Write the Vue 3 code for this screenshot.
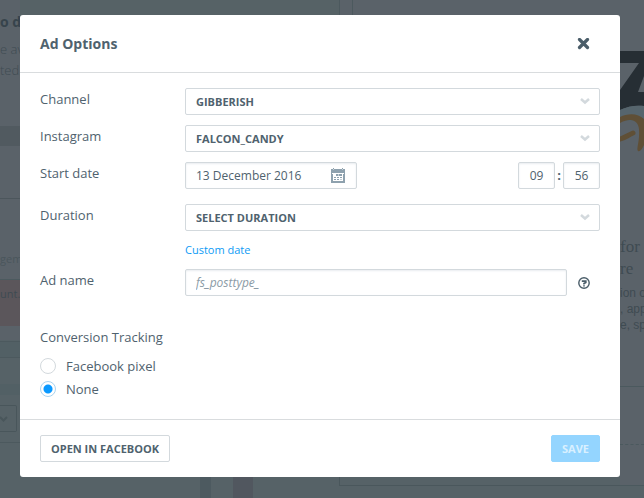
<script setup>
import { ref } from 'vue'

const channel = ref('GIBBERISH')
const instagram = ref('FALCON_CANDY')
const duration = ref('SELECT DURATION')
const date = ref('13 December 2016')
const hour = ref('09')
const minute = ref('56')
const adName = ref('')
const tracking = ref('none')
</script>

<template>
  <div class="screen">
    <div class="page" aria-hidden="true">
      <div class="left">
        <div class="intro">
          <b>o d</b>
          <p>e av</p>
          <p>ted.</p>
        </div>
        <div class="band"></div>
        <div class="panel"></div>
        <div class="tab">geme</div>
        <div class="alert">unt.</div>
        <div class="rows">
          <div class="row-a"></div>
          <div class="row-b"></div>
          <div class="row-c"></div>
        </div>
        <div class="picker-row">
          <div class="picker">
            <svg width="10" height="8" viewBox="0 0 10 8"><path d="M0 2l3.500 3.500L7 2" fill="none" stroke="#49565b" stroke-width="2" /></svg>
          </div>
        </div>
      </div>
      <div class="middle">
        <div class="top-strip"><i class="t1"></i><i class="t2"></i></div>
        <div class="bottom-strip">
          <i class="b1"></i><i class="b2"></i><i class="b3"></i><i class="b4"></i><i class="b5"></i>
        </div>
      </div>
      <div class="right">
        <svg class="logo" width="24" height="106" viewBox="0 0 24 106">
          <path d="M0 0H24V25L18 41H24V55C16 54 8 55 0 59V39L19 12H0Z" fill="#262e34" />
          <path d="M0 59C8 55 16 54 24 55V70H0Z" fill="#56656d" />
          <path d="M0 66C8 62 18 62 24 68V94C22 98 20 101 18 100C16 98 20 90 19 78C18 70 12 66 0 72Z" fill="#5f4f36" />
          <path d="M0 88C5 87 8 84 13 82" fill="none" stroke="#5f4f36" stroke-width="5" stroke-linecap="round" />
        </svg>
        <h2>for<br />re</h2>
        <p>ion o<br />, app<br />e, sp</p>
        <div class="line-a"></div>
        <div class="line-b"></div>
        <div class="line-c"></div>
      </div>
    </div>

    <form class="dialog" role="dialog" aria-labelledby="dialog-title" @submit.prevent>
      <header>
        <h1 id="dialog-title">Ad Options</h1>
        <button class="icon-button" type="button" aria-label="Close">
          <svg width="13" height="12" viewBox="0 0 13 12">
            <path d="M2.500 1.500L10.500 9.500M10.500 1.500L2.500 9.500" fill="none" stroke="#4a5d69" stroke-width="3.200" stroke-linecap="round" />
          </svg>
        </button>
      </header>

      <div class="content">
        <div class="field">
          <label for="channel">Channel</label>
          <div class="select">
            <select id="channel" v-model="channel"><option>GIBBERISH</option></select>
            <svg width="10" height="7" viewBox="0 0 10 7"><path d="M1 1L5 4.500L9 1" /></svg>
          </div>
        </div>
        <div class="field">
          <label for="instagram">Instagram</label>
          <div class="select">
            <select id="instagram" v-model="instagram"><option>FALCON_CANDY</option></select>
            <svg width="10" height="7" viewBox="0 0 10 7"><path d="M1 1L5 4.500L9 1" /></svg>
          </div>
        </div>
        <div class="field date-field">
          <label for="date">Start date</label>
          <div class="schedule">
            <div class="date">
              <input id="date" v-model="date" type="text" />
              <svg width="14" height="15" viewBox="0 0 14 15">
                <path fill="#8ea1ae" fill-rule="evenodd" d="M0 1H2V0H3V1H11V0H12V1H14V15H0ZM1 5V6H2V13H12V6H13V5Z" />
                <path fill="#c5d0d7" d="M2 1h1v1H2zM11 1h1v1h-1z" />
                <path fill="#8ea1ae" d="M5 6h6v2H5zM3 9h2v1H3zM6 9h2v1H6zM9 9h2v1H9zM3 11h2v1H3zM6 11h2v1H6z" />
                <path fill="#c5d0d7" d="M7 6h1v2H7zM9 11h2v1H9z" />
              </svg>
            </div>
            <div class="time">
              <input v-model="hour" type="text" aria-label="Hour" />
              <b>:</b>
              <input v-model="minute" type="text" aria-label="Minute" />
            </div>
          </div>
        </div>
        <div class="field">
          <label for="duration">Duration</label>
          <div class="select">
            <select id="duration" v-model="duration"><option>SELECT DURATION</option></select>
            <svg width="10" height="7" viewBox="0 0 10 7"><path d="M1 1L5 4.500L9 1" /></svg>
          </div>
          <a href="#custom">Custom date</a>
        </div>
        <div class="field">
          <label for="ad-name">Ad name</label>
          <div class="name">
            <input id="ad-name" v-model="adName" type="text" placeholder="fs_posttype_" />
            <button class="icon-button" type="button" aria-label="Help">
              <svg width="12" height="12" viewBox="0 0 12 12" fill="none" stroke="#4a5d69">
                <circle cx="6" cy="6" r="5.200" stroke-width="1.400" />
                <path d="M3.800 4.200H7.800V5.500L6 6.600V7.500" stroke-width="1.700" />
                <path d="M6 8.200V9.600" stroke-width="1.700" />
              </svg>
            </button>
          </div>
        </div>

        <fieldset>
          <legend>Conversion Tracking</legend>
          <label><input v-model="tracking" type="radio" name="tracking" value="pixel" />Facebook pixel</label>
          <label><input v-model="tracking" type="radio" name="tracking" value="none" />None</label>
        </fieldset>
      </div>

      <footer>
        <button class="open" type="button">OPEN IN FACEBOOK</button>
        <button class="save" type="submit" disabled>SAVE</button>
      </footer>
    </form>
  </div>
</template>

<style>
body {
  margin: 0;
  background: #5a6269;
}
</style>

<style scoped>
* {
  box-sizing: border-box;
}

.screen {
  position: relative;
  min-height: 100vh;
  padding: 15px 24px 21px 20px;
  overflow: hidden;
  font-family: "Open Sans", sans-serif;
  font-size: 13px;
  line-height: 20px;
  color: #4f626e;
}

/* Page behind the dialog */
.page {
  position: absolute;
  inset: 0;
  display: grid;
  grid-template-columns: 20px 1fr 24px;
  overflow: hidden;
  background: #5a6269;
  color: #3f4b52;
}

.left,
.right {
  min-width: 0;
  white-space: nowrap;
}

.left {
  background: linear-gradient(#5a6269 340px, #566267 340px);
}

.intro {
  height: 126px;
  padding-top: 12px;
}

.intro b {
  display: block;
  margin-bottom: 7px;
  font-size: 14px;
  color: #37444c;
}

.intro p {
  margin: 0;
  font-weight: 300;
  line-height: 21px;
}

.band {
  height: 20px;
  background: #515a60;
}

.panel {
  height: 53px;
  border-bottom: 1px solid #4c565c;
}

.tab {
  height: 81px;
  padding-top: 50px;
  font-size: 11px;
  color: #4a565c;
  border-bottom: 1px solid #4c5a5f;
}

.alert {
  height: 46px;
  padding-top: 4px;
  font-size: 11px;
  background: #5b565b;
}

.row-a {
  height: 16px;
  border-bottom: 1px solid #4c595e;
}

.row-b {
  height: 16px;
  background: #526065;
  border-bottom: 1px solid #4c595e;
}

.row-c {
  height: 37px;
  border-bottom: 11px solid #526065;
}

.picker-row {
  height: 48px;
  padding: 10px 3px 0 0;
  border-bottom: 1px solid #4c595e;
}

.picker {
  display: flex;
  align-items: center;
  height: 27px;
  border: 1px solid #49565b;
  border-left: 0;
  border-radius: 0 2px 2px 0;
}

.middle {
  display: flex;
  flex-direction: column;
  justify-content: space-between;
}

.top-strip,
.bottom-strip {
  display: flex;
  height: 28px;
}

.t1 {
  width: 320px;
  background: #566266;
  border-right: 1px solid #4c595e;
}

.t2 {
  width: 13px;
  border-right: 1px solid #4c595e;
}

.bottom-strip {
  background: #566267;
}

.b1 {
  width: 180px;
}

.b2 {
  width: 11px;
  background: #4d5a60;
}

.b3 {
  width: 22px;
}

.b4 {
  width: 20px;
  background: #51575f;
}

.b5 {
  flex: 1;
  height: 16px;
  margin-left: 86px;
  border: solid #4a575c;
  border-width: 0 0 1px 1px;
}

.right {
  padding-top: 51px;
  background: linear-gradient(#5a6269 485px, #566267 485px);
}

.logo {
  display: block;
}

h2 {
  margin: 79px 0 0;
  font: 17px/22px "Liberation Serif", serif;
}

.right p {
  margin: 5px 0 53px;
  font: 12px/16px "Liberation Sans", sans-serif;
}

.line-a {
  height: 1px;
  background: #4b595e;
}

.line-b {
  height: 58px;
  border-bottom: 1px dashed #4b595e;
}

.line-c {
  height: 41px;
  border-bottom: 1px solid #4b595e;
}

/* Dialog */
.dialog {
  position: relative;
  background: #fff;
  border-radius: 3px;
}

header {
  display: flex;
  align-items: center;
  justify-content: space-between;
  height: 58px;
  padding: 0 30px 0 20px;
  border-bottom: 1px solid #d9dcde;
}

h1 {
  margin: 0;
  font-size: 14px;
  line-height: 20px;
  font-weight: 700;
}

button {
  font-family: inherit;
}

.icon-button {
  display: flex;
  padding: 0;
  border: 0;
  background: none;
}

.content {
  display: flex;
  flex-direction: column;
  gap: 10px;
  padding: 15px 20px 20px;
}

.field {
  display: grid;
  grid-template-columns: 145px 1fr;
}

.field > label {
  padding-top: 1px;
}

.date-field {
  margin-bottom: 5px;
}

.select {
  position: relative;
}

.select svg {
  position: absolute;
  top: 10px;
  right: 10px;
  pointer-events: none;
}

.select path {
  fill: none;
  stroke: #d3d9dd;
  stroke-width: 2.500;
}

select,
input[type="text"] {
  display: block;
  width: 100%;
  height: 27px;
  margin: 0;
  padding: 0 10px;
  border: 1px solid #d3d9dd;
  border-radius: 2px;
  outline: 0;
  background: #fff;
  color: inherit;
  font-family: inherit;
}

select {
  appearance: none;
  font-size: 11px;
  font-weight: 700;
}

input[type="text"] {
  font-size: 12px;
  box-shadow: inset 0 1px 2px #e9edf0;
}

input::placeholder {
  color: #8b9ba6;
  font-style: italic;
  opacity: 1;
}

.schedule {
  display: flex;
  justify-content: space-between;
}

.date {
  position: relative;
  width: 172px;
}

.date svg {
  position: absolute;
  top: 6px;
  right: 12px;
}

.time {
  display: flex;
}

.time input[type="text"] {
  width: 37px;
  padding: 0;
  text-align: center;
}

.time b {
  width: 8px;
  line-height: 27px;
  text-align: center;
}

a {
  grid-column: 2;
  justify-self: start;
  margin-top: 10px;
  font-size: 11px;
  line-height: 18px;
  color: #0d9bf5;
  text-decoration: none;
}

.name {
  display: flex;
  align-items: center;
  gap: 11px;
  padding-right: 10px;
}

fieldset {
  display: flex;
  flex-direction: column;
  gap: 3px;
  margin: 21px 0 0;
  padding: 0;
  border: 0;
}

legend {
  margin-bottom: 9px;
  padding: 0;
}

fieldset label {
  display: flex;
  align-items: center;
  align-self: flex-start;
  gap: 10px;
}

input[type="radio"] {
  appearance: none;
  width: 16px;
  height: 16px;
  margin: 0;
  border: 1px solid #d3d9dd;
  border-radius: 50%;
}

input[type="radio"]:checked {
  border-color: #a9d3f0;
  background: radial-gradient(circle, #0a99ff 4px, #fff 5px);
}

footer {
  display: flex;
  justify-content: space-between;
  padding: 15px 20px;
  border-top: 1px solid #d9dcde;
}

footer button {
  height: 27px;
  padding: 0 10px;
  border: 1px solid #d3d9dd;
  border-radius: 2px;
  background: #fff;
  color: inherit;
  font-size: 11px;
  font-weight: 700;
}

footer .save {
  border-color: #94d5ff;
  background: #94d5ff;
  color: #d9f0ff;
}
</style>
